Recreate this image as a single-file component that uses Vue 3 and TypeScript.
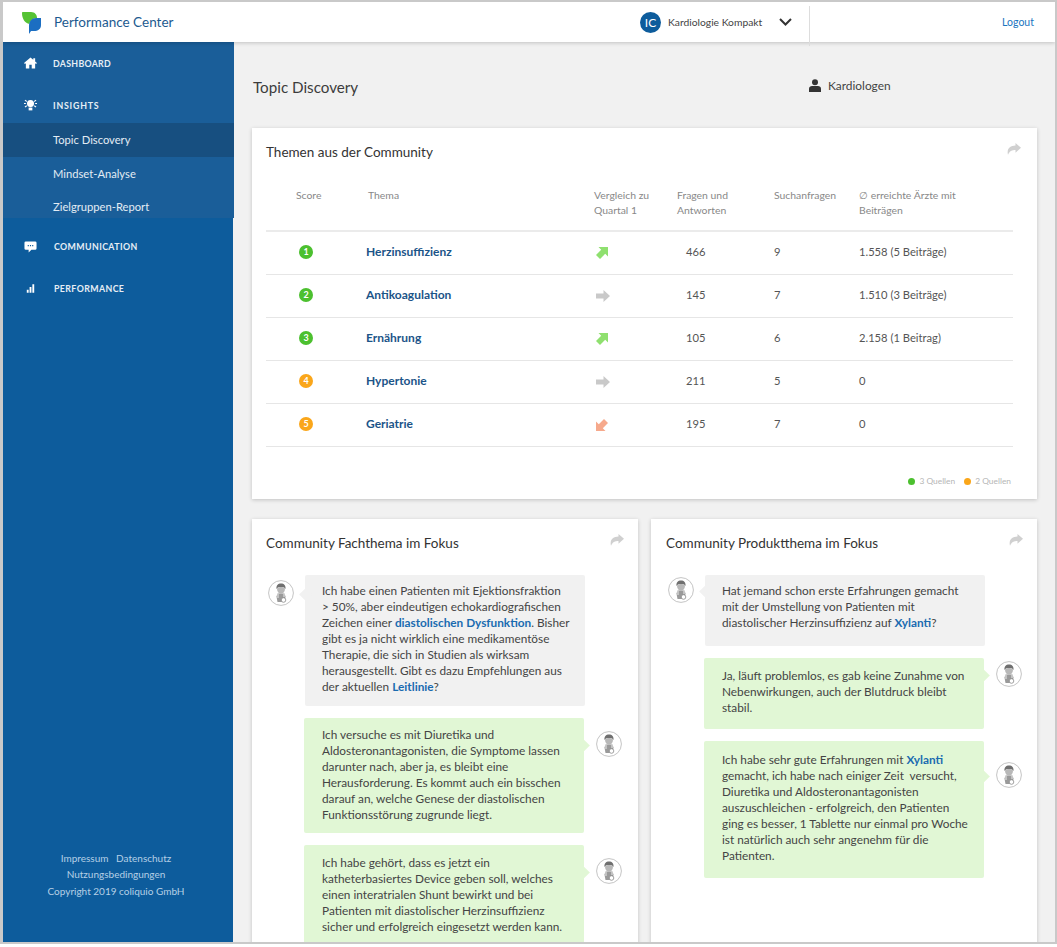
<script setup lang="ts">
interface Row {
  rank: number
  topic: string
  trend: 'up' | 'flat' | 'down'
  questions: number
  searches: number
  reach: string
}

interface Message {
  side: 'in' | 'out'
  // Abstand Avatar/Pfeil zur Oberkante der Bubble
  offset: number
  pad: string
  lines: string[]
}

interface Panel {
  title: string
  cls: string
  messages: Message[]
}

const rows: Row[] = [
  { rank: 1, topic: 'Herzinsuffizienz', trend: 'up', questions: 466, searches: 9, reach: '1.558 (5 Beiträge)' },
  { rank: 2, topic: 'Antikoagulation', trend: 'flat', questions: 145, searches: 7, reach: '1.510 (3 Beiträge)' },
  { rank: 3, topic: 'Ernährung', trend: 'up', questions: 105, searches: 6, reach: '2.158 (1 Beitrag)' },
  { rank: 4, topic: 'Hypertonie', trend: 'flat', questions: 211, searches: 5, reach: '0' },
  { rank: 5, topic: 'Geriatrie', trend: 'down', questions: 195, searches: 7, reach: '0' },
]

const subItems = ['Topic Discovery', 'Mindset-Analyse', 'Zielgruppen-Report']

const trendPaths: Record<Row['trend'], string> = {
  up: 'M2.500 0H12v9.500L9.200 6.800 4 12 0 8 5.200 2.800z',
  flat: 'M0 3.400h7.500V0L14 6l-6.500 6V8.600H0z',
  down: 'M9.500 12H0V2.500l2.800 2.700L8 0l4 4-5.200 5.200z',
}

// *...* markiert Links im Text
const panels: Panel[] = [
  {
    title: 'Community Fachthema im Fokus',
    cls: '',
    messages: [
      {
        side: 'in', offset: 5, pad: 'pad-a',
        lines: [
          'Ich habe einen Patienten mit Ejektionsfraktion',
          '> 50%, aber eindeutigen echokardiografischen',
          'Zeichen einer *diastolischen Dysfunktion*. Bisher',
          'gibt es ja nicht wirklich eine medikamentöse',
          'Therapie, die sich in Studien als wirksam',
          'herausgestellt. Gibt es dazu Empfehlungen aus',
          'der aktuellen *Leitlinie*?',
        ],
      },
      {
        side: 'out', offset: 13, pad: 'pad-e',
        lines: [
          'Ich versuche es mit Diuretika und',
          'Aldosteronantagonisten, die Symptome lassen',
          'darunter nach, aber ja, es bleibt eine',
          'Herausforderung. Es kommt auch ein bisschen',
          'darauf an, welche Genese der diastolischen',
          'Funktionsstörung zugrunde liegt.',
        ],
      },
      {
        side: 'out', offset: 13, pad: 'pad-f',
        lines: [
          'Ich habe gehört, dass es jetzt ein',
          'katheterbasiertes Device geben soll, welches',
          'einen interatrialen Shunt bewirkt und bei',
          'Patienten mit diastolischer Herzinsuffizienz',
          'sicher und erfolgreich eingesetzt werden kann.',
        ],
      },
    ],
  },
  {
    title: 'Community Produktthema im Fokus',
    cls: 'right',
    messages: [
      {
        side: 'in', offset: 2, pad: 'pad-b',
        lines: [
          'Hat jemand schon erste Erfahrungen gemacht',
          'mit der Umstellung von Patienten mit',
          'diastolischer Herzinsuffizienz auf *Xylanti*?',
        ],
      },
      {
        side: 'out', offset: 3, pad: 'pad-c',
        lines: [
          'Ja, läuft problemlos, es gab keine Zunahme von',
          'Nebenwirkungen, auch der Blutdruck bleibt',
          'stabil.',
        ],
      },
      {
        side: 'out', offset: 21, pad: 'pad-d',
        lines: [
          'Ich habe sehr gute Erfahrungen mit *Xylanti*',
          'gemacht, ich habe nach einiger Zeit  versucht,',
          'Diuretika und Aldosteronantagonisten',
          'auszuschleichen - erfolgreich, den Patienten',
          'ging es besser, 1 Tablette nur einmal pro Woche',
          'ist natürlich auch sehr angenehm für die',
          'Patienten.',
        ],
      },
    ],
  },
]

const segments = (line: string) => line.split('*')
</script>

<template>
  <div class="frame">
    <header class="topbar">
      <div class="brand">
        <svg class="logo" viewBox="0 0 19 22" width="19" height="22">
          <path d="M0 1c0-.6.4-1 1-1h8c4 0 6 3 6 6-3 0-7 2-7.500 6C3 11 0 7 0 1z" fill="#55c234" />
          <path d="M7 14c0-5 3-8 7-8h5v7c0 4-3 6-7 6H9l-2 3z" fill="#1b6ec2" />
        </svg>
        <span>Performance Center</span>
      </div>
      <div class="account">
        <span class="initials">IC</span>
        <span class="account-name">Kardiologie Kompakt</span>
        <svg width="13" height="8" viewBox="0 0 13 8"><path d="M1 1l5.500 5.500L12 1" fill="none" stroke="#333" stroke-width="2" /></svg>
      </div>
      <a class="logout">Logout</a>
    </header>

    <div class="body">
      <aside class="sidebar">
        <nav>
          <div class="nav-block">
            <div class="nav-item">
              <svg class="nav-icon" viewBox="0 0 14 12"><path d="M7 0L0 6l1 1 1-.8V12h3.700V8h2.600v4H12V6.200l1 .8 1-1-2-1.700V1h-2v1.600z" fill="#fff" /></svg>
              <span>DASHBOARD</span>
            </div>
            <div class="nav-item short">
              <svg class="nav-icon" viewBox="0 0 14 12"><circle cx="7" cy="4.500" r="3.800" fill="#fff" /><rect x="5" y="8.800" width="4" height="3" fill="#fff" /><path d="M0 4.500h2M12 4.500h2M1 .8l2 1.400M13 .8l-2 1.400M1 8.200l2-1.400M13 8.200l-2-1.400" stroke="#fff" stroke-width="1.100" /></svg>
              <span>INSIGHTS</span>
            </div>
            <ul class="sub">
              <li v-for="(item, i) in subItems" :key="item" :class="{ active: i === 0 }">{{ item }}</li>
            </ul>
          </div>
          <div class="lower-group">
            <div class="nav-item lower">
              <svg class="nav-icon" viewBox="0 0 14 12"><path d="M2 0h10a1.500 1.500 0 0 1 1.500 1.500v6A1.500 1.500 0 0 1 12 9H8l-3 3V9H2A1.500 1.500 0 0 1 .5 7.500v-6A1.500 1.500 0 0 1 2 0z" fill="#fff" /><path d="M4 4.500h1.200M6.400 4.500h1.200M8.800 4.500H10" stroke="#0d5c9c" stroke-width="1.200" /></svg>
              <span>COMMUNICATION</span>
            </div>
            <div class="nav-item lower">
              <svg class="nav-icon" viewBox="0 0 14 12"><path d="M3 8h2v3H3zM6 5h2v6H6zM9 2h2v9H9z" fill="#fff" /></svg>
              <span>PERFORMANCE</span>
            </div>
          </div>
        </nav>
        <footer class="side-foot">
          <div>Impressum &nbsp; Datenschutz</div>
          <div>Nutzungsbedingungen</div>
          <div>Copyright 2019 coliquio GmbH</div>
        </footer>
      </aside>

      <main class="content">
        <div class="page-head">
          <h1>Topic Discovery</h1>
          <div class="audience">
            <svg width="12" height="13" viewBox="0 0 12 13"><circle cx="6" cy="3.200" r="3" fill="#333" /><path d="M0 13V9.500C0 8 1.500 7 3 7h6c1.500 0 3 1 3 2.500V13z" fill="#333" /></svg>
            <span>Kardiologen</span>
          </div>
        </div>

        <section class="card topics">
          <div class="card-head">
            <h2>Themen aus der Community</h2>
            <svg class="share" viewBox="0 0 14 12"><path d="M8.500 0L14 4.800 8.500 9.800V7C5 7 2.500 8 1 11.800-.5 6 3 2.800 8.500 2.600z" /></svg>
          </div>
          <div class="tbl">
            <div class="tr th">
              <div class="score-head">Score</div>
              <div class="topic-head">Thema</div>
              <div>Vergleich zu<br />Quartal 1</div>
              <div>Fragen und<br />Antworten</div>
              <div>Suchanfragen</div>
              <div>∅ erreichte Ärzte mit<br />Beiträgen</div>
            </div>
            <div v-for="row in rows" :key="row.rank" class="tr td">
              <div class="score-cell">
                <span class="badge" :class="row.rank < 4 ? 'green' : 'orange'">{{ row.rank }}</span>
              </div>
              <div class="topic">{{ row.topic }}</div>
              <div>
                <svg class="trend" :class="row.trend" viewBox="0 0 14 12" width="14" height="12">
                  <path :d="trendPaths[row.trend]" />
                </svg>
              </div>
              <div class="num">{{ row.questions }}</div>
              <div>{{ row.searches }}</div>
              <div>{{ row.reach }}</div>
            </div>
          </div>
          <div class="legend">
            <i class="dot green"></i><span>3 Quellen</span>
            <i class="dot orange"></i><span>2 Quellen</span>
          </div>
        </section>

        <div class="columns">
          <section v-for="panel in panels" :key="panel.title" class="card chat" :class="panel.cls">
            <div class="card-head">
              <h2>{{ panel.title }}</h2>
              <svg class="share" viewBox="0 0 14 12"><path d="M8.500 0L14 4.800 8.500 9.800V7C5 7 2.500 8 1 11.800-.5 6 3 2.800 8.500 2.600z" /></svg>
            </div>
            <div
              v-for="(msg, i) in panel.messages"
              :key="i"
              class="msg"
              :class="msg.side"
              :style="{ '--off': msg.offset + 'px' }"
            >
              <div class="bubble" :class="msg.pad">
                <div v-for="(line, l) in msg.lines" :key="l">
                  <template v-for="(seg, s) in segments(line)" :key="s">
                    <a v-if="s % 2">{{ seg }}</a>
                    <template v-else>{{ seg }}</template>
                  </template>
                </div>
              </div>
              <svg class="avatar" viewBox="0 0 26 26">
                <circle cx="13" cy="13" r="12.400" fill="#fff" stroke="#c4c4c4" />
                <path d="M8.500 9c-.5-3.500 1.500-5.500 4.500-5.500s5 2 4.500 5.500c-1-1.500-2-2-4.500-2s-3.500.5-4.500 2z" fill="#6f6f6f" />
                <path d="M9 8.500c1-1 2-1.500 4-1.500s3 .5 4 1.500c0 3-1.500 5-4 5s-4-2-4-5z" fill="#b8b8b8" />
                <path d="M9.500 13.500h7l1 3-1 5.500h-7l-1-5.500z" fill="#9a9a9a" />
                <path d="M10 14v4M16 14v3" stroke="#fff" stroke-width=".8" fill="none" />
                <circle cx="15.500" cy="20" r="2.300" fill="#fff" stroke="#8a8a8a" stroke-width=".8" />
              </svg>
            </div>
          </section>
        </div>
      </main>
    </div>
  </div>
</template>

<style>
html, body {
  margin: 0;
  height: 947px;
  overflow: hidden;
  background: #fff;
}
</style>

<style scoped>
.frame {
  box-sizing: border-box;
  width: 1057px;
  height: 944px;
  border: 2px solid #c9c9c9;
  border-left-width: 3px;
  display: flex;
  flex-direction: column;
  overflow: hidden;
  font-family: Lato, "Noto Sans", sans-serif;
  font-size: 12px;
  color: #444;
}

.topbar {
  height: 40px;
  flex: none;
  display: flex;
  align-items: center;
  background: #fff;
  box-shadow: 0 1px 4px rgba(0, 0, 0, .2);
  position: relative;
  z-index: 2;
}

.brand {
  width: 637px;
  display: flex;
  align-items: center;
  padding-left: 19px;
  gap: 13px;
  font-size: 13.500px;
  color: #1d5a8f;
  box-sizing: border-box;
}

.logo { margin-top: 2px; }

.account {
  width: 169px;
  height: 32px;
  margin-top: 8px;
  padding-bottom: 8px;
  display: flex;
  align-items: center;
  gap: 7px;
  border-right: 1px solid #ddd;
  font-size: 10.300px;
  color: #444;
}

.account svg { margin-left: 10px; }

.initials {
  width: 21px;
  height: 21px;
  border-radius: 50%;
  background: #0d5c9c;
  color: #fff;
  font-size: 12px;
  display: flex;
  align-items: center;
  justify-content: center;
}

.logout {
  margin-left: auto;
  margin-right: 21px;
  color: #1a75c0;
  font-size: 10.500px;
}

.body {
  flex: 1;
  display: flex;
  min-height: 0;
}

.sidebar {
  width: 230px;
  flex: none;
  background: #0d5c9c;
  display: flex;
  flex-direction: column;
  justify-content: space-between;
  position: relative;
  z-index: 1;
}

.nav-block {
  background: #1a5e99;
  width: 231px;
}

.nav-item {
  height: 42px;
  display: flex;
  align-items: center;
  padding-left: 21px;
  gap: 16px;
  color: #e6eef5;
  font-size: 8.800px;
  font-weight: 700;
  letter-spacing: .3px;
}

.nav-item.short { height: 39px; padding-top: 3px; box-sizing: border-box; letter-spacing: .8px; }

.lower-group { margin-top: 8px; }

.nav-item.lower { height: 41.500px; gap: 17px; letter-spacing: .4px; }

.nav-icon { width: 13px; height: 12px; flex: none; }

.sub {
  list-style: none;
  margin: 0;
  padding: 0;
}

.sub li {
  height: 33.500px;
  line-height: 33.500px;
  padding-left: 50px;
  color: #e3ecf4;
  font-size: 11.200px;
}

.sub li:last-child { height: 28px; }

.sub li.active { background: #174f80; }

.side-foot {
  box-sizing: border-box;
  width: 230px;
  text-align: center;
  color: #b5d0e6;
  font-size: 10px;
  line-height: 16.500px;
  padding: 0 4px 43px 0;
}

.content {
  flex: 1;
  background: #f1f1f1;
  padding: 0 18px 0 19px;
  overflow: hidden;
}

.page-head {
  height: 86px;
  display: flex;
  align-items: center;
  padding-top: 3px;
  box-sizing: border-box;
}

.page-head h1 {
  margin: 0 0 0 1px;
  width: 556px;
  font-size: 15.200px;
  font-weight: 400;
  color: #3c3c3c;
}

.audience {
  display: flex;
  align-items: center;
  gap: 7px;
  font-size: 11.900px;
  color: #444;
  margin-top: -2px;
}

.card {
  background: #fff;
  box-shadow: 0 1px 4px rgba(0, 0, 0, .2);
  box-sizing: border-box;
}

.topics {
  height: 371px;
  padding: 0 24px 0 14px;
}

.card-head {
  display: flex;
  justify-content: space-between;
  padding-top: 14px;
}

.topics .card-head { margin-right: -8px; }

.card-head h2 {
  margin: 0;
  font-size: 13.500px;
  font-weight: 400;
  color: #333;
  line-height: 20px;
}

.share {
  width: 14px;
  height: 12px;
  fill: #d0d0d0;
  margin-top: 1px;
}

.tbl { margin-top: 23px; }

.tr {
  display: grid;
  grid-template-columns: 100px 228px 83px 97px 85px 1fr;
}

.th {
  height: 47px;
  color: #888;
  font-size: 10.400px;
  line-height: 15px;
  padding-top: 3px;
  box-sizing: border-box;
  border-bottom: 2px solid #ebebeb;
}

.score-head { padding-left: 30px; }
.topic-head { padding-left: 2px; }

.td {
  height: 43px;
  align-items: center;
  font-size: 11.200px;
  color: #555;
  border-bottom: 1px solid #e6e6e6;
  box-sizing: border-box;
  padding-bottom: 3px;
}

.score-cell { padding-left: 33px; display: flex; }

.badge {
  width: 14px;
  height: 14px;
  border-radius: 50%;
  color: #fff;
  font-size: 9px;
  font-weight: 700;
  display: flex;
  align-items: center;
  justify-content: center;
}

.green { background: #4cc02f; }
.orange { background: #faa61a; }

.topic {
  color: #1b5488;
  font-weight: 700;
  font-size: 12px;
}

.num { padding-left: 9px; }

.trend { display: block; margin: 2px 0 0 2px; }
.trend.up { fill: #8fe06f; }
.trend.flat { fill: #c9c9c9; }
.trend.down { fill: #f6a98c; }

.legend {
  display: flex;
  justify-content: flex-end;
  align-items: center;
  margin-top: 29px;
  margin-right: 2px;
  color: #b5b5b5;
  font-size: 8.400px;
}

.dot {
  width: 7px;
  height: 7px;
  border-radius: 50%;
  margin-right: 4px;
}

.legend span + .dot { margin-left: 9px; }

.columns {
  display: grid;
  grid-template-columns: 386px 386px;
  gap: 13px;
  margin-top: 20px;
}

.chat {
  height: 440px;
  padding: 0 14px;
}

.chat.right { padding-left: 15px; }

.chat .card-head { margin-bottom: 22px; }

.msg {
  display: flex;
  align-items: flex-start;
  margin-bottom: 12px;
}

.msg.in { flex-direction: row-reverse; justify-content: flex-end; padding-left: 2px; }
.msg.in .bubble { background: #f1f1f1; margin-left: 11px; }
.msg.out { margin-left: 38px; }
.msg.out .bubble { background: #e1f7d5; margin-right: 12px; padding-left: 18px; }

.bubble {
  position: relative;
  width: 280px;
  box-sizing: border-box;
  padding-left: 17px;
  border-radius: 2px;
  font-size: 11.800px;
  line-height: 16px;
  color: #444;
  white-space: pre;
}

.pad-a { padding-top: 8px; padding-bottom: 11px; }
.pad-b { padding-top: 8px; padding-bottom: 15px; }
.pad-c { padding-top: 10px; padding-bottom: 13px; }
.pad-d { padding-top: 11px; padding-bottom: 14px; }
.pad-e { padding-top: 9px; padding-bottom: 10px; }
.pad-f { padding-top: 10px; padding-bottom: 10px; }

.bubble::after {
  content: '';
  position: absolute;
  top: calc(var(--off) + 10px);
  width: 9px;
  height: 9px;
  background: inherit;
  transform: rotate(45deg);
}

.msg.in .bubble::after { left: -4px; }
.msg.out .bubble::after { right: -4px; }

.bubble a {
  color: #1a6bb0;
  font-weight: 700;
}

.avatar {
  width: 26px;
  height: 26px;
  flex: none;
  margin-top: var(--off);
}
</style>
